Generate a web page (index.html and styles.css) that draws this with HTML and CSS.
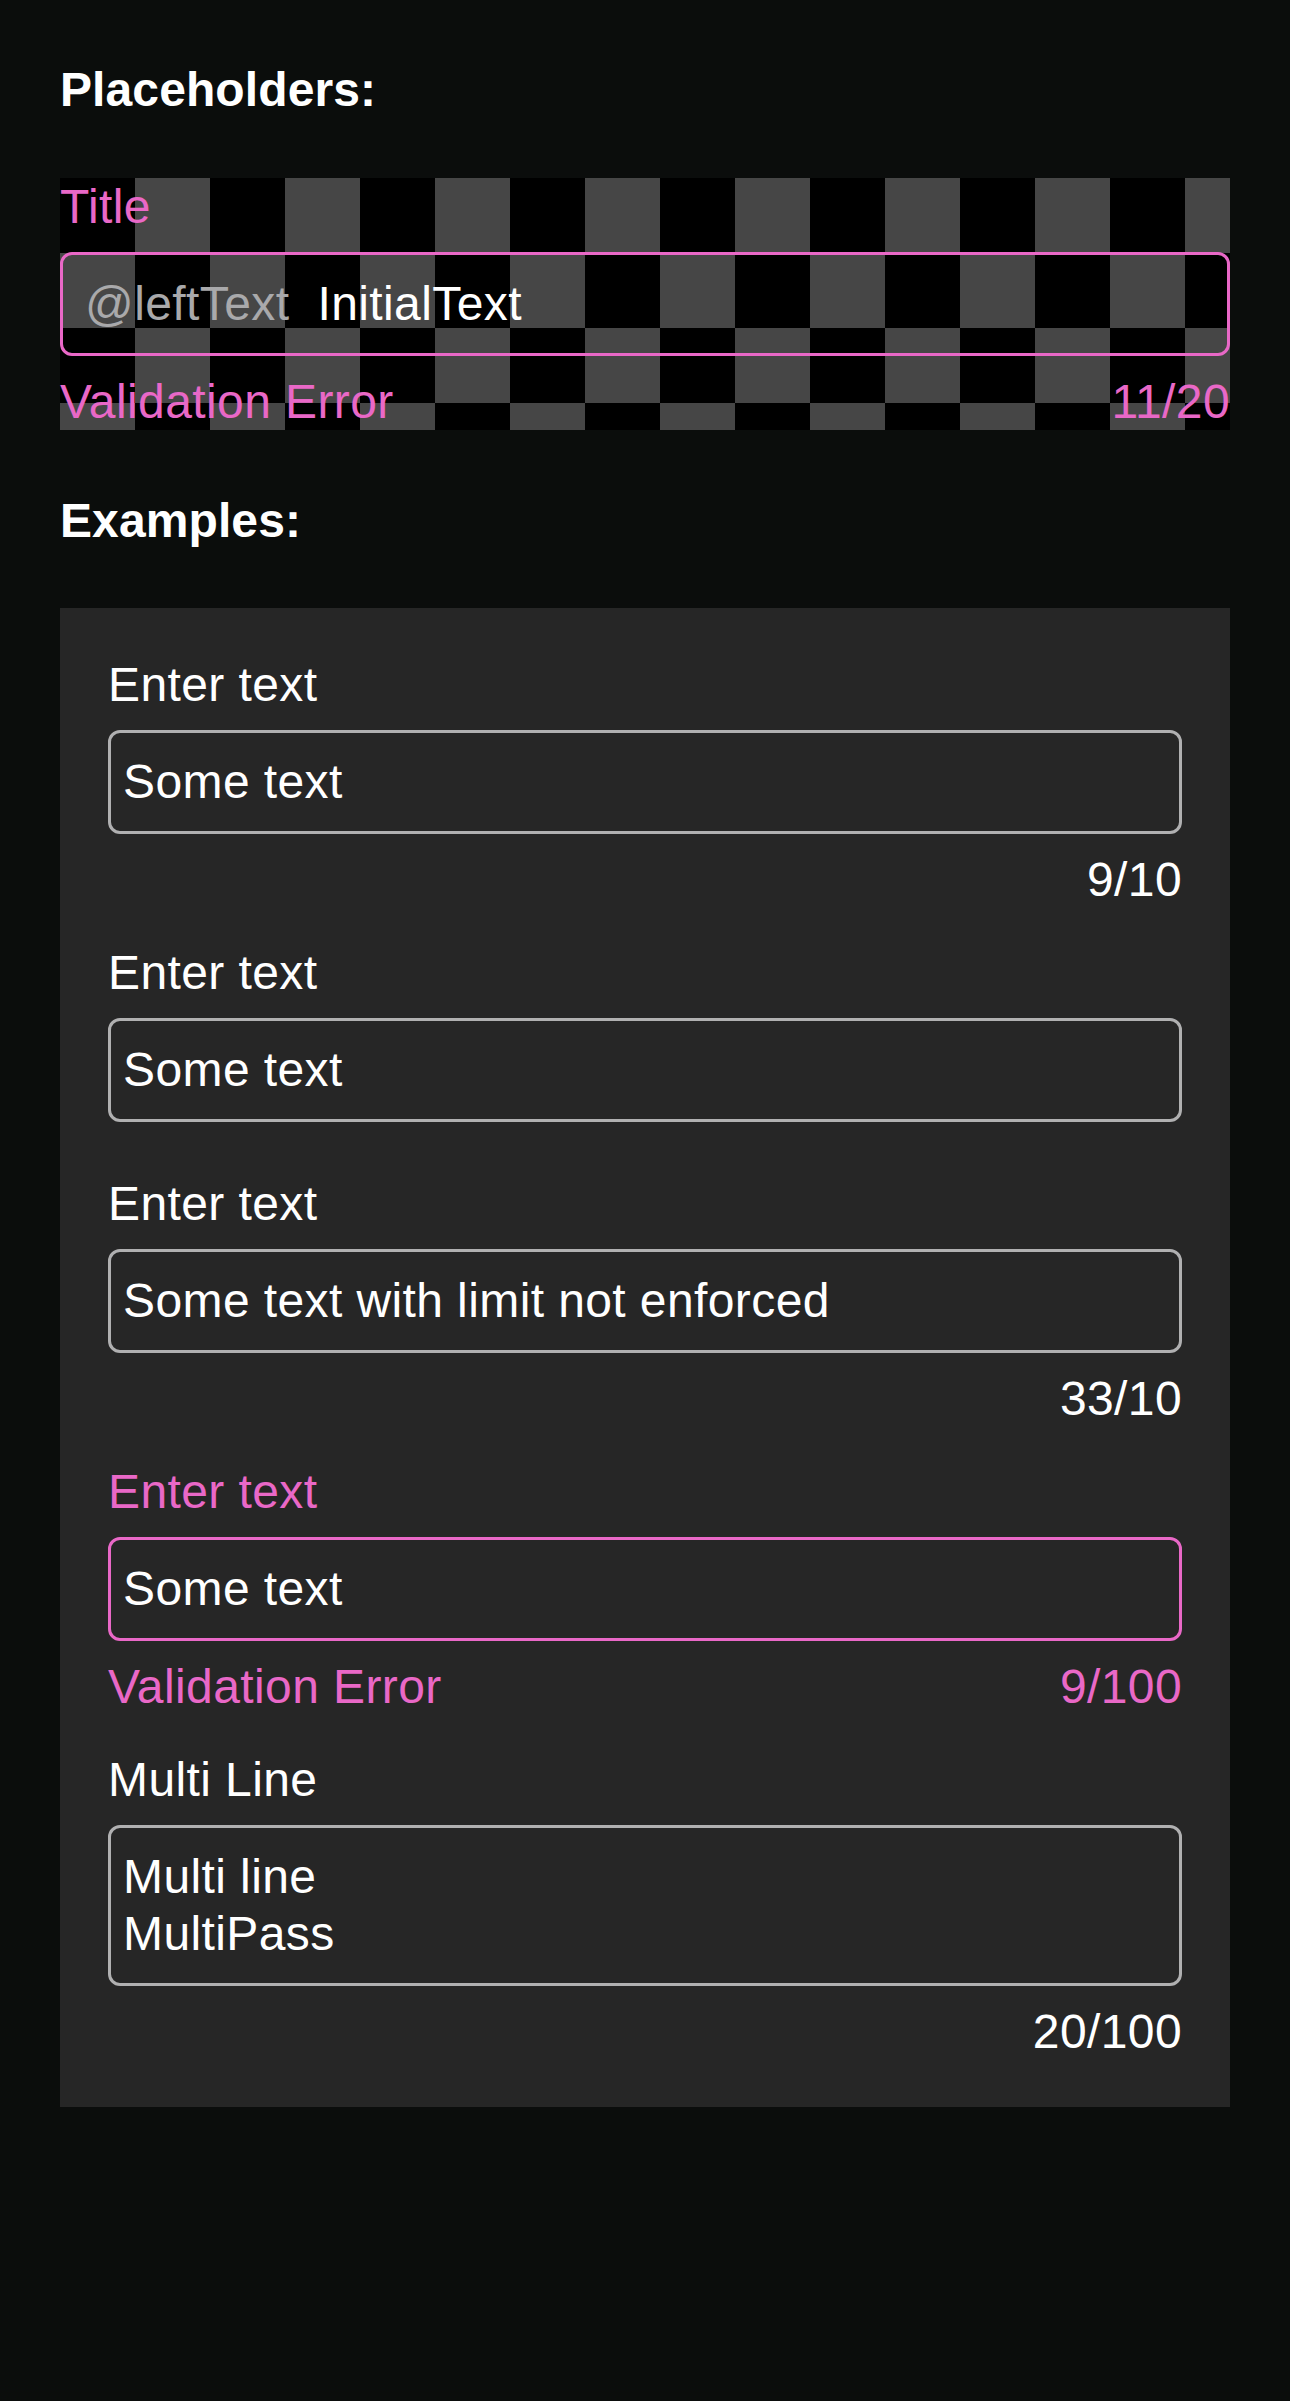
FILE: index.html
```html
<!DOCTYPE html>
<html lang="en">
<head>
<meta charset="utf-8">
<title>Text fields</title>
<link rel="stylesheet" href="styles.css">
</head>
<body>
<main class="page">
  <h2 class="heading heading-first">Placeholders:</h2>
  <div class="field checker">
    <div class="label pink">Title</div>
    <div class="input input-error input-placeholder">
      <span class="lefttext">@leftText</span><span class="value">InitialText</span>
    </div>
    <div class="footer pink"><span>Validation Error</span><span>11/20</span></div>
  </div>

  <h2 class="heading heading-examples">Examples:</h2>

  <section class="panel">
    <div class="field">
      <div class="label">Enter text</div>
      <div class="input">Some text</div>
      <div class="footer"><span></span><span>9/10</span></div>
    </div>
    <div class="field">
      <div class="label">Enter text</div>
      <div class="input">Some text</div>
      <div class="footer footer-empty"></div>
    </div>
    <div class="field">
      <div class="label">Enter text</div>
      <div class="input">Some text with limit not enforced</div>
      <div class="footer"><span></span><span>33/10</span></div>
    </div>
    <div class="field">
      <div class="label pink">Enter text</div>
      <div class="input input-error">Some text</div>
      <div class="footer pink"><span>Validation Error</span><span>9/100</span></div>
    </div>
    <div class="field">
      <div class="label">Multi Line</div>
      <div class="input">Multi line<br>MultiPass</div>
      <div class="footer"><span></span><span>20/100</span></div>
    </div>
  </section>
</main>
</body>
</html>
```

FILE: styles.css
```css
html, body {
  margin: 0;
  padding: 0;
}

body {
  background: #0b0d0c;
  color: #ffffff;
  font-family: "Liberation Sans", Arial, sans-serif;
  font-size: 48px;
  line-height: 57px;
  letter-spacing: 0.4px;
}

.page {
  padding: 61px 60px 0;
}

.heading {
  margin: 0;
  font-size: 48px;
  font-weight: 700;
  line-height: 57px;
  letter-spacing: 0.1px;
}

.heading-first {
  margin-bottom: 60px;
}

.heading-examples {
  margin: 62px 0 59px;
}

.field {
  display: flex;
  flex-direction: column;
  gap: 17px;
}

.checker {
  background-color: #000;
  background-image: conic-gradient(#464646 0 25%, #000000 0 50%, #464646 0 75%, #000000 0 100%);
  background-size: 150px 150px;
  background-position: 0 0;
}

.label {
  height: 57px;
  white-space: nowrap;
}

.pink {
  color: #e968c7;
}

.input {
  border: 3px solid #b0b0b1;
  border-radius: 12px;
  padding: 20px 12px 21px;
  color: #ffffff;
  white-space: nowrap;
}

.input-error {
  border-color: #e968c7;
}

.input-placeholder {
  padding-left: 22px;
  display: flex;
}

.lefttext {
  color: #a9a9ab;
  margin-right: 28px;
}

.footer {
  height: 57px;
  display: flex;
  justify-content: space-between;
  white-space: nowrap;
}

.footer-empty {
  height: 0;
}

.panel {
  background: #262626;
  padding: 48px 48px 47px;
  display: flex;
  flex-direction: column;
  gap: 36px;
}
```
